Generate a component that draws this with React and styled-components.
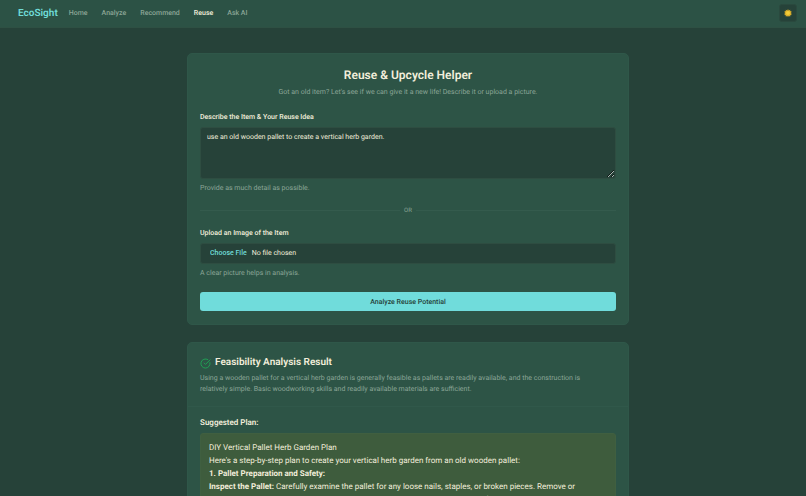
import React, { useState } from 'react';
import styled, { createGlobalStyle } from 'styled-components';
import { LuCircleCheckBig } from 'react-icons/lu';

const GlobalStyle = createGlobalStyle`
  * {
    box-sizing: border-box;
  }

  html {
    scrollbar-width: none;
  }

  body {
    margin: 0;
    background-color: #264239;
    color: #f2eedb;
    font-family: Roboto, sans-serif;
    font-size: 7px;
    line-height: 11px;
    text-rendering: geometricPrecision;
  }

  h1, h2, h3, p {
    margin: 0;
  }

  button, input, textarea {
    font-family: inherit;
    text-rendering: inherit;
  }
`;

const Navbar = styled.header`
  display: flex;
  align-items: center;
  height: 28px;
  padding: 0 9px 1px 18px;
  background-color: #2c5245;
  border-bottom: 1px solid #2e5043;
`;

const Logo = styled.a`
  margin-right: 11px;
  color: #70dcd8;
  font-size: 10px;
  font-weight: 600;
  text-decoration: none;
`;

const NavLinks = styled.nav`
  display: flex;
  flex: 1;
  gap: 14px;
`;

const NavLink = styled.a`
  color: ${({ $active }) => ($active ? '#f2eedb' : '#8ba596')};
  font-weight: 500;
  text-decoration: none;
`;

const ThemeButton = styled.button`
  display: flex;
  align-items: center;
  justify-content: center;
  width: 18px;
  height: 18px;
  padding: 0;
  border: 1px solid #2a493e;
  border-radius: 3px;
  background-color: #264239;
  cursor: pointer;
`;

const Page = styled.main`
  padding: 25px 0 25px 10px;
`;

const Column = styled.div`
  display: flex;
  flex-direction: column;
  gap: 17px;
  max-width: 442px;
  margin: 0 auto;
`;

const Card = styled.section`
  border: 1px solid #2f5749;
  border-radius: 5px;
  background-color: #2d5446;
`;

const CardBody = styled.form`
  display: flex;
  flex-direction: column;
  padding: 13px 12px;
`;

const Title = styled.h1`
  margin-bottom: 4px;
  font-size: 12px;
  font-weight: 600;
  line-height: 16px;
  text-align: center;
`;

const Intro = styled.p`
  margin-bottom: 14px;
  color: #8ba596;
  text-align: center;
`;

const Muted = styled.p`
  color: #8ba596;
`;

const Field = styled.div`
  display: flex;
  flex-direction: column;
  gap: 4px;
`;

const Label = styled.label`
  font-weight: 500;
`;

const TextArea = styled.textarea`
  width: 100%;
  height: 52px;
  padding: 4px 6px;
  border: 1px solid #2e4d41;
  border-radius: 3px;
  outline: none;
  background-color: #264239;
  color: #f2eedb;
  font-size: 7px;
  line-height: 11px;
  resize: vertical;
`;

const FileInput = styled.input`
  width: 100%;
  height: 21px;
  padding: 4px 9px;
  border: 1px solid #2e4d41;
  border-radius: 3px;
  background-color: #264239;
  color: #f2eedb;
  font-size: 7px;
  line-height: 11px;

  &::file-selector-button {
    margin: 0 5px 0 0;
    padding: 0;
    border: 0;
    background: none;
    color: #70dcd8;
    font-family: inherit;
    font-size: 7px;
    font-weight: 500;
    line-height: 11px;
  }
`;

const Divider = styled.div`
  display: flex;
  align-items: center;
  gap: 4px;
  margin: 11px 0 12px;
  color: #8ba596;
  font-size: 6px;

  &::before,
  &::after {
    content: '';
    flex: 1;
    border-top: 1px solid #345b4d;
  }
`;

const SubmitButton = styled.button`
  height: 19px;
  margin-top: 13px;
  border: 0;
  border-radius: 3px;
  background-color: #70dcdb;
  color: #264239;
  font-size: 7px;
  font-weight: 500;
  cursor: pointer;
`;

const ResultHeader = styled.div`
  padding: 13px 12px 11px;
  border-bottom: 1px solid #30584a;
`;

const ResultTitle = styled.h2`
  display: flex;
  align-items: center;
  gap: 4px;
  margin-bottom: 3px;
  font-size: 10px;
  font-weight: 600;
  line-height: 14px;

  svg {
    color: #20a455;
  }
`;

const ResultBody = styled.div`
  padding: 10px 12px 12px;
`;

const PlanHeading = styled.h3`
  margin-bottom: 4px;
  font-size: 8px;
  font-weight: 600;
  line-height: 12px;
`;

const Plan = styled.div`
  padding: 7px 8px;
  border: 1px solid #405f40;
  border-radius: 3px;
  background-color: #3e5c3d;
  font-size: 8px;
  line-height: 13px;
`;

const links = ['Home', 'Analyze', 'Recommend', 'Reuse', 'Ask AI'];

const App = () => {
  const [idea, setIdea] = useState('use an old wooden pallet to create a vertical herb garden.');

  return (
    <>
      <GlobalStyle />
      <Navbar>
        <Logo href="#home">EcoSight</Logo>
        <NavLinks>
          {links.map((link) => (
            <NavLink key={link} href={`#${link}`} $active={link === 'Reuse'}>
              {link}
            </NavLink>
          ))}
        </NavLinks>
        <ThemeButton type="button" aria-label="Toggle theme">
          <svg width="8" height="8" viewBox="0 0 18 18" fill="#d9ae2b">
            <path d="M9 0l1.6 3.2L14 1.6l-.1 3.1 3.5.8-2 2.6L18 9l-2.6 1.7 2 2.6-3.5.5.1 3.1-3.4-1.4L9 18l-1.6-2.5L4 16.9l.1-3.1-3.5-.5 2-2.6L0 9l2.6-1-2-2.5 3.5-.8L4 1.6l3.4 1.6z" />
            <circle cx="9" cy="9" r="4.5" fill="#f5cd38" />
          </svg>
        </ThemeButton>
      </Navbar>

      <Page>
        <Column>
          <Card>
            <CardBody onSubmit={(e) => e.preventDefault()}>
              <Title>Reuse &amp; Upcycle Helper</Title>
              <Intro>
                Got an old item? Let's see if we can give it a new life! Describe it or upload a picture.
              </Intro>
              <Field>
                <Label htmlFor="idea">Describe the Item &amp; Your Reuse Idea</Label>
                <TextArea id="idea" value={idea} onChange={(e) => setIdea(e.target.value)} />
                <Muted>Provide as much detail as possible.</Muted>
              </Field>
              <Divider>OR</Divider>
              <Field>
                <Label htmlFor="image">Upload an Image of the Item</Label>
                <FileInput id="image" type="file" accept="image/*" />
                <Muted>A clear picture helps in analysis.</Muted>
              </Field>
              <SubmitButton type="submit">Analyze Reuse Potential</SubmitButton>
            </CardBody>
          </Card>

          <Card>
            <ResultHeader>
              <ResultTitle>
                <LuCircleCheckBig size={11} />
                Feasibility Analysis Result
              </ResultTitle>
              <Muted>
                Using a wooden pallet for a vertical herb garden is generally feasible as pallets are readily
                available, and the construction is
                <br />
                relatively simple. Basic woodworking skills and readily available materials are sufficient.
              </Muted>
            </ResultHeader>
            <ResultBody>
              <PlanHeading>Suggested Plan:</PlanHeading>
              <Plan>
                <p>DIY Vertical Pallet Herb Garden Plan</p>
                <p>Here's a step-by-step plan to create your vertical herb garden from an old wooden pallet:</p>
                <p>
                  <strong>1. Pallet Preparation and Safety:</strong>
                </p>
                <p>
                  <strong>Inspect the Pallet:</strong> Carefully examine the pallet for any loose nails, staples, or
                  broken pieces. Remove or
                  <br />
                  secure any damaged boards as needed. Look for signs of chemical treatment (often indicated by
                </p>
              </Plan>
            </ResultBody>
          </Card>
        </Column>
      </Page>
    </>
  );
};

export default App;
